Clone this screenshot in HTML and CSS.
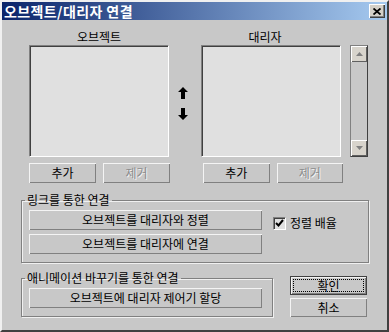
FILE: index.html
```html
<!DOCTYPE html>
<html>

<head>
    <title>오브젝트/대리자 연결</title>
    <link rel="stylesheet" href="styles.css">
</head>

<body>
    <div class="window">
        <div class="titlebar">
            <span class="title">오브젝트/대리자 연결</span>
            <button class="close">
                <svg width="8" height="7" viewBox="0 0 8 7">
                    <path d="M0.5 0.5 L7.5 6.5 M7.5 0.5 L0.5 6.5" stroke="#000" stroke-width="1.8" fill="none" />
                </svg>
            </button>
        </div>

        <div class="content">
            <div class="pick-row">
                <div class="pick">
                    <div class="pick-label">오브젝트</div>
                    <div class="listbox"></div>
                    <div class="pick-buttons">
                        <button class="btn">추가</button>
                        <button class="btn" disabled>제거</button>
                    </div>
                </div>

                <div class="swap">
                    <svg class="arrow-up" width="10" height="12" viewBox="0 0 10 12">
                        <polygon points="5,0 10,5 7,5 7,12 3,12 3,5 0,5" fill="#000" />
                    </svg>
                    <svg class="arrow-down" width="10" height="12" viewBox="0 0 10 12">
                        <polygon points="3,0 7,0 7,7 10,7 5,12 0,7 3,7" fill="#000" />
                    </svg>
                </div>

                <div class="pick pick-right">
                    <div class="pick-label">대리자</div>
                    <div class="listbox"></div>
                    <div class="pick-buttons">
                        <button class="btn">추가</button>
                        <button class="btn" disabled>제거</button>
                    </div>
                </div>

                <div class="scrollbar">
                    <span class="sb-btn">
                        <svg width="7" height="4" viewBox="0 0 7 4"><polygon points="3.5,0 7,4 0,4" fill="#808080" /></svg>
                    </span>
                    <span class="sb-track"></span>
                    <span class="sb-btn sb-down">
                        <svg width="7" height="4" viewBox="0 0 7 4"><polygon points="0,0 7,0 3.5,4" fill="#808080" /></svg>
                    </span>
                </div>
            </div>

            <fieldset class="group group-link">
                <legend>링크를 통한 연결</legend>
                <div class="link-row">
                    <div class="link-buttons">
                        <button class="btn">오브젝트를 대리자와 정렬</button>
                        <button class="btn">오브젝트를 대리자에 연결</button>
                    </div>
                    <label class="check">
                        <span class="checkbox">
                            <svg width="9" height="9" viewBox="0 0 9 9">
                                <path d="M1 4 L3.5 6.5 L8 1" stroke="#000" stroke-width="2" fill="none" />
                            </svg>
                        </span>
                        정렬 배율
                    </label>
                </div>
            </fieldset>

            <div class="bottom-row">
                <fieldset class="group group-anim">
                    <legend>애니메이션 바꾸기를 통한 연결</legend>
                    <button class="btn">오브젝트에 대리자 제어기 할당</button>
                </fieldset>
                <div class="dialog-buttons">
                    <button class="btn btn-default">확인</button>
                    <button class="btn">취소</button>
                </div>
            </div>
        </div>
    </div>
</body>

</html>
```

FILE: styles.css
```css
body {
    margin: 0;
    font-family: "Noto Sans CJK KR", "Noto Sans", sans-serif;
    font-size: 12px;
    color: #000;
    background: #c8c8c8;
}

.window {
    width: 389px;
    height: 332px;
    box-sizing: border-box;
    border: 2px solid;
    border-color: #f0f0f0 #404040 #404040 #f0f0f0;
    background: #c8c8c8;
    display: flex;
    flex-direction: column;
}

.titlebar {
    height: 18px;
    display: flex;
    align-items: center;
    justify-content: space-between;
    background: linear-gradient(to right, #0a246a, #a6caf0);
}

.title {
    color: #fff;
    font-weight: bold;
    font-size: 14px;
    letter-spacing: 0.4px;
    line-height: 14px;
    padding-left: 2px;
}

.close {
    width: 16px;
    height: 14px;
    margin-right: 2px;
    padding: 0;
    border: none;
    background: #d4d0c8;
    box-shadow: inset 1px 1px #fff, inset -1px -1px #404040, inset -2px -2px #808080;
    display: flex;
    align-items: center;
    justify-content: center;
}

.content {
    padding: 10px 0 0 19px;
}

.pick-row {
    display: flex;
    padding-left: 8px;
}

.pick {
    width: 142px;
}

.pick-label {
    text-align: center;
    line-height: 14px;
    margin-bottom: 1px;
    padding-right: 2px;
}

.pick-right .pick-label {
    padding-right: 14px;
}

.listbox {
    width: 140px;
    height: 112px;
    box-sizing: border-box;
    background: #e0e0e0;
    border: 1px solid;
    border-color: #808080 #fff #fff #808080;
    box-shadow: inset 1px 1px #404040;
}

.pick-buttons {
    display: flex;
    gap: 7px;
    margin-top: 6px;
}

.pick-right .pick-buttons {
    padding-left: 2px;
}

.btn {
    font-family: inherit;
    font-size: 12px;
    color: #000;
    width: 67px;
    height: 20px;
    padding: 0;
    border: none;
    background: #c8c8c8;
    box-shadow: inset 1px 1px #f4f4f4, inset -1px -1px #808080;
    line-height: 14px;
}

.btn:disabled {
    color: #8c8c8c;
    text-shadow: 1px 1px 0 #f4f4f4;
}

.swap {
    width: 30px;
    padding-left: 7px;
    box-sizing: border-box;
    display: flex;
    flex-direction: column;
}

.arrow-up {
    margin-top: 57px;
}

.arrow-down {
    margin-top: 9px;
}

.scrollbar {
    width: 18px;
    height: 112px;
    margin: 15px 0 0 7px;
    box-sizing: border-box;
    border: 1px solid;
    border-color: #808080 #404040 #404040 #808080;
    display: flex;
    flex-direction: column;
}

.sb-btn {
    height: 16px;
    background: #d8d4cc;
    box-shadow: inset 1px 1px #fff, inset -1px -1px #606060;
    display: flex;
    align-items: center;
    justify-content: center;
}

.sb-track {
    flex: 1;
    background: #c8c8c8;
}

.group {
    margin: 0;
    border: 1px solid #808080;
    box-shadow: 1px 1px 0 #f0f0f0, inset 1px 1px 0 #f0f0f0;
}

.group legend {
    padding: 0 2px;
    margin-left: -4px;
    line-height: 14px;
}

.group-link {
    width: 348px;
    box-sizing: border-box;
    margin-top: 10px;
    padding: 3px 7px 8px 7px;
}

.link-row {
    display: flex;
    gap: 11px;
}

.link-buttons {
    display: flex;
    flex-direction: column;
    gap: 4px;
}

.link-buttons .btn {
    width: 233px;
}

.check {
    display: flex;
    align-items: center;
    gap: 4px;
    margin-top: 6px;
    align-self: flex-start;
    line-height: 14px;
}

.checkbox {
    width: 13px;
    height: 13px;
    box-sizing: border-box;
    background: #e0e0e0;
    border: 1px solid;
    border-color: #808080 #fff #fff #808080;
    box-shadow: inset 1px 1px #404040;
    display: flex;
    align-items: center;
    justify-content: center;
}

.bottom-row {
    display: flex;
    margin-top: 8px;
}

.group-anim {
    width: 252px;
    box-sizing: border-box;
    padding: 3px 7px 7px 7px;
}

.group-anim .btn {
    width: 233px;
}

.dialog-buttons {
    display: flex;
    flex-direction: column;
    gap: 3px;
    margin: 5px 0 0 17px;
}

.dialog-buttons .btn {
    width: 77px;
    height: 19px;
}

.btn-default {
    outline: 1px dotted #000;
    outline-offset: -4px;
    box-shadow: inset 0 0 0 1px #404040, inset 2px 2px #f4f4f4, inset -2px -2px #808080;
}
```
